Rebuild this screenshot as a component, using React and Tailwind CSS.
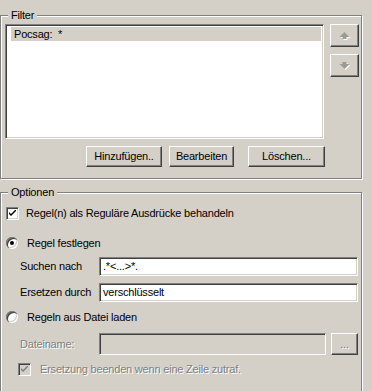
import React from "react";

const raised =
  "border border-t-white border-l-white border-b-[#404040] border-r-[#404040] shadow-[inset_-1px_-1px_0_#808080] bg-[#d4d0c8]";
const sunken =
  "border border-t-[#808080] border-l-[#808080] border-b-white border-r-white shadow-[inset_1px_1px_0_#404040,inset_-1px_-1px_0_#d4d0c8]";

function Group({ label, className, children }) {
  return (
    <div
      className={`relative border border-[#808080] shadow-[inset_1px_1px_0_#fff,1px_1px_0_#fff] ${className}`}
    >
      <span className="absolute left-[7px] top-[-8px] bg-[#d4d0c8] px-[3px] leading-[14px] text-black">
        {label}
      </span>
      {children}
    </div>
  );
}

function Arrow({ up }) {
  // greyed out arrow with white emboss
  const d = up
    ? "M0.5 6 L5.5 1 L10.5 6 L7.5 6 L7.5 8 L3.5 8 L3.5 6 Z"
    : "M3.5 1 L7.5 1 L7.5 3 L10.5 3 L5.5 8 L0.5 3 L3.5 3 Z";
  return (
    <svg width="12" height="10" viewBox="0 0 12 10">
      <path d={d} fill="#fff" transform="translate(1 1)" />
      <path d={d} fill="#9c9a96" />
    </svg>
  );
}

function Check({ disabled }) {
  return (
    <div
      className={`flex h-[13px] w-[13px] shrink-0 items-center justify-center ${sunken} ${disabled ? "bg-[#d4d0c8]" : "bg-white"}`}
    >
      <svg width="7" height="7" viewBox="0 0 7 7">
        <path
          d="M0 2 L0 4 L2 6 L7 1 L7 -1 L2 4 Z"
          fill={disabled ? "#808080" : "#000"}
        />
      </svg>
    </div>
  );
}

function Radio({ checked }) {
  return (
    <div className="relative h-[12px] w-[12px] shrink-0 rounded-full bg-white shadow-[inset_1px_1px_0_#808080,inset_2px_2px_0_#404040,inset_-1px_-1px_0_#fff,inset_-2px_-2px_0_#d4d0c8]">
      {checked && (
        <div className="absolute left-[4px] top-[4px] h-[4px] w-[4px] rounded-full bg-black" />
      )}
    </div>
  );
}

export default function App() {
  return (
    <div className="h-[391px] w-[372px] overflow-hidden bg-[#d4d0c8] pt-[15px] font-['Liberation_Sans',Arial,sans-serif] text-[11px] tracking-[-0.2px] text-black">
      <Group label="Filter" className="h-[164px] w-[362px]">
        <div className="flex pl-[4px] pt-[8px]">
          <div className={`h-[115px] w-[319px] bg-white ${sunken} p-[2px]`}>
            <div className="ml-[3px] flex h-[14px] w-[310px] items-center bg-[#d4d0c8] pl-[3px] leading-none">
              Pocsag:&nbsp;&nbsp;*
            </div>
          </div>
          <div className="ml-[6px] flex flex-col gap-[7px]">
            <button className={`flex h-[23px] w-[29px] items-center justify-center ${raised}`}>
              <Arrow up />
            </button>
            <button className={`flex h-[23px] w-[29px] items-center justify-center ${raised}`}>
              <Arrow />
            </button>
          </div>
        </div>
        <div className="ml-[85px] mt-[7px] flex">
          <button className={`h-[21px] w-[76px] ${raised}`}>Hinzufügen..</button>
          <button className={`ml-[7px] h-[21px] w-[65px] ${raised}`}>Bearbeiten</button>
          <button className={`ml-[14px] h-[21px] w-[77px] ${raised}`}>Löschen...</button>
        </div>
      </Group>

      <Group label="Optionen" className="mt-[13px] h-[220px] w-[362px]">
        <div className="flex flex-col pl-[5px] pt-[14px]">
          <div className="flex h-[13px] items-center">
            <Check />
            <span className="ml-[7px]">Regel(n) als Reguläre Ausdrücke behandeln</span>
          </div>
          <div className="mt-[17px] flex h-[12px] items-center">
            <Radio checked />
            <span className="ml-[9px]">Regel festlegen</span>
          </div>
          <div className="mt-[8px] flex h-[19px] items-center">
            <span className="ml-[14px] w-[79px]">Suchen nach</span>
            <div className={`flex h-[19px] w-[259px] items-center bg-white pl-[3px] ${sunken}`}>
              .*&lt;...&gt;*.
            </div>
          </div>
          <div className="mt-[7px] flex h-[19px] items-center">
            <span className="ml-[14px] w-[79px]">Ersetzen durch</span>
            <div className={`flex h-[19px] w-[259px] items-center bg-white pl-[3px] ${sunken}`}>
              verschlüsselt
            </div>
          </div>
          <div className="mt-[9px] flex h-[12px] items-center">
            <Radio />
            <span className="ml-[9px]">Regeln aus Datei laden</span>
          </div>
          <div className="mt-[10px] flex h-[22px] items-center">
            <span className="ml-[14px] w-[79px] text-[#808080] [text-shadow:1px_1px_0_#fff]">
              Dateiname:
            </span>
            <div className={`h-[22px] w-[227px] bg-[#d4d0c8] ${sunken}`} />
            <button
              className={`ml-[5px] flex h-[22px] w-[27px] items-center justify-center text-[#808080] [text-shadow:1px_1px_0_#fff] ${raised}`}
            >
              ...
            </button>
          </div>
          <div className="mt-[8px] flex h-[13px] items-center pl-[12px]">
            <Check disabled />
            <span className="ml-[9px] text-[#808080] [text-shadow:1px_1px_0_#fff]">
              Ersetzung beenden wenn eine Zeile zutraf.
            </span>
          </div>
        </div>
      </Group>
    </div>
  );
}
